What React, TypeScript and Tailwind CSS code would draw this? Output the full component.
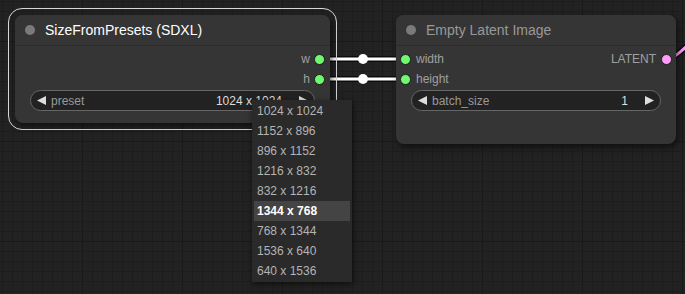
import React from 'react';

const presets = [
  '1024 x 1024',
  '1152 x 896',
  '896 x 1152',
  '1216 x 832',
  '832 x 1216',
  '1344 x 768',
  '768 x 1344',
  '1536 x 640',
  '640 x 1536',
];

const GridBackground: React.FC = () => {
  const xs = Array.from({ length: 70 }, (_, i) => 2.5 + i * 10);
  const ys = Array.from({ length: 30 }, (_, i) => 1.5 + i * 10);
  return (
    <svg className="absolute inset-0" width={685} height={294}>
      <rect width={685} height={294} fill="#222222" />
      {xs.map((x) => (
        <line
          key={`x${x}`}
          x1={x}
          x2={x}
          y1={0}
          y2={294}
          stroke={(x - 2.5) % 100 === 80 ? '#191919' : '#1d1d1d'}
          strokeWidth={1}
        />
      ))}
      {ys.map((y) => (
        <line
          key={`y${y}`}
          y1={y}
          y2={y}
          x1={0}
          x2={685}
          stroke={(y - 1.5) % 100 === 40 ? '#191919' : '#1d1d1d'}
          strokeWidth={1}
        />
      ))}
    </svg>
  );
};

const Links: React.FC = () => (
  <svg className="absolute inset-0 pointer-events-none" width={685} height={294}>
    {[59, 79].map((y) => (
      <g key={y}>
        <line x1={322} x2={405} y1={y} y2={y} stroke="rgba(0,0,0,0.6)" strokeWidth={6} />
        <line x1={322} x2={405} y1={y} y2={y} stroke="#ffffff" strokeWidth={3} />
        <circle cx={363} cy={y} r={5} fill="#ffffff" />
      </g>
    ))}
    <path d="M668 58 C676 58 680 51 692 42" stroke="rgba(0,0,0,0.6)" strokeWidth={6} fill="none" />
    <path d="M668 58 C676 58 680 51 692 42" stroke="#ff9cf9" strokeWidth={3} fill="none" />
  </svg>
);

const Dot: React.FC<{ color: string }> = ({ color }) => (
  <span
    className="block w-[11px] h-[11px] rounded-full border border-[#1e1e1e]"
    style={{ backgroundColor: color }}
  />
);

const ArrowLeft = () => (
  <svg width={9} height={9} viewBox="0 0 9 9">
    <path d="M0 4.5 L9 0 L9 9 Z" fill="#dddddd" />
  </svg>
);

const ArrowRightIcon = () => (
  <svg width={9} height={9} viewBox="0 0 9 9">
    <path d="M9 4.5 L0 0 L0 9 Z" fill="#dddddd" />
  </svg>
);

const ComboWidget: React.FC<{ label: string; value: string }> = ({ label, value }) => (
  <div className="h-[21px] mx-[15px] rounded-full bg-[#222222] border border-[#666666] flex items-center pl-[6px] pr-[6px] text-[12px]">
    <ArrowLeft />
    <span className="ml-[5px] text-[#999999]">{label}</span>
    <span className="ml-auto mr-[17px] text-[#dddddd]">{value}</span>
    <ArrowRightIcon />
  </div>
);

const TitleBar: React.FC<{ title: string; selected?: boolean }> = ({ title, selected }) => (
  <div className="h-[31px] flex items-center pl-[10px] gap-[10px] border-b border-[#2c2c2c] bg-[#353535] rounded-t-[8px]">
    <span className="w-[10px] h-[10px] rounded-full bg-[#7a7a7a]" />
    <span className={selected ? 'text-[14px] text-white' : 'text-[14px] text-[#999999]'}>{title}</span>
  </div>
);

const SizeNode: React.FC = () => (
  <div className="absolute left-[8px] top-[8px] p-[6px] rounded-[14px] border border-[#d8d8d8]">
    <div className="w-[315px] h-[108px] rounded-[8px] bg-[#353535] shadow-[2px_3px_6px_rgba(0,0,0,0.55)] flex flex-col">
      <TitleBar title="SizeFromPresets (SDXL)" selected />
      <div className="pt-[3px] flex flex-col text-[12px] text-[#a0a0a0]">
        <div className="h-[20px] flex items-center justify-end gap-[4px] pr-[5px]">
          <span>w</span>
          <Dot color="#70f870" />
        </div>
        <div className="h-[20px] flex items-center justify-end gap-[4px] pr-[5px]">
          <span>h</span>
          <Dot color="#70f870" />
        </div>
      </div>
      <div className="mt-[1px]">
        <ComboWidget label="preset" value="1024 x 1024" />
      </div>
    </div>
  </div>
);

const LatentNode: React.FC = () => (
  <div className="absolute left-[396px] top-[15px] w-[280px] h-[129px] rounded-[8px] bg-[#353535] shadow-[2px_3px_6px_rgba(0,0,0,0.55)] flex flex-col">
    <TitleBar title="Empty Latent Image" />
    <div className="pt-[3px] flex flex-col text-[12px] text-[#a0a0a0]">
      <div className="h-[20px] flex items-center pl-[4px] pr-[4px]">
        <Dot color="#70f870" />
        <span className="ml-[5px]">width</span>
        <span className="ml-auto mr-[5px]">LATENT</span>
        <Dot color="#ff9cf9" />
      </div>
      <div className="h-[20px] flex items-center pl-[4px]">
        <Dot color="#70f870" />
        <span className="ml-[5px]">height</span>
      </div>
    </div>
    <div className="mt-[1px]">
      <ComboWidget label="batch_size" value="1" />
    </div>
  </div>
);

const PresetMenu: React.FC = () => (
  <div className="absolute left-[252px] top-[100px] w-[100px] py-[1px] px-[2px] bg-[#2a2a2a] shadow-[1px_2px_6px_rgba(0,0,0,0.6)] text-[12px]">
    {presets.map((p) => (
      <div
        key={p}
        className={
          p === '1344 x 768'
            ? 'h-[20px] flex items-center pl-[3px] bg-[#444444] text-white font-bold'
            : 'h-[20px] flex items-center pl-[3px] text-[#b4b4b4]'
        }
      >
        {p}
      </div>
    ))}
  </div>
);

export default function App() {
  return (
    <div className="relative w-[685px] h-[294px] overflow-hidden bg-[#222222] font-['Liberation_Sans',Arial,sans-serif]">
      <GridBackground />
      <Links />
      <SizeNode />
      <LatentNode />
      <PresetMenu />
    </div>
  );
}
